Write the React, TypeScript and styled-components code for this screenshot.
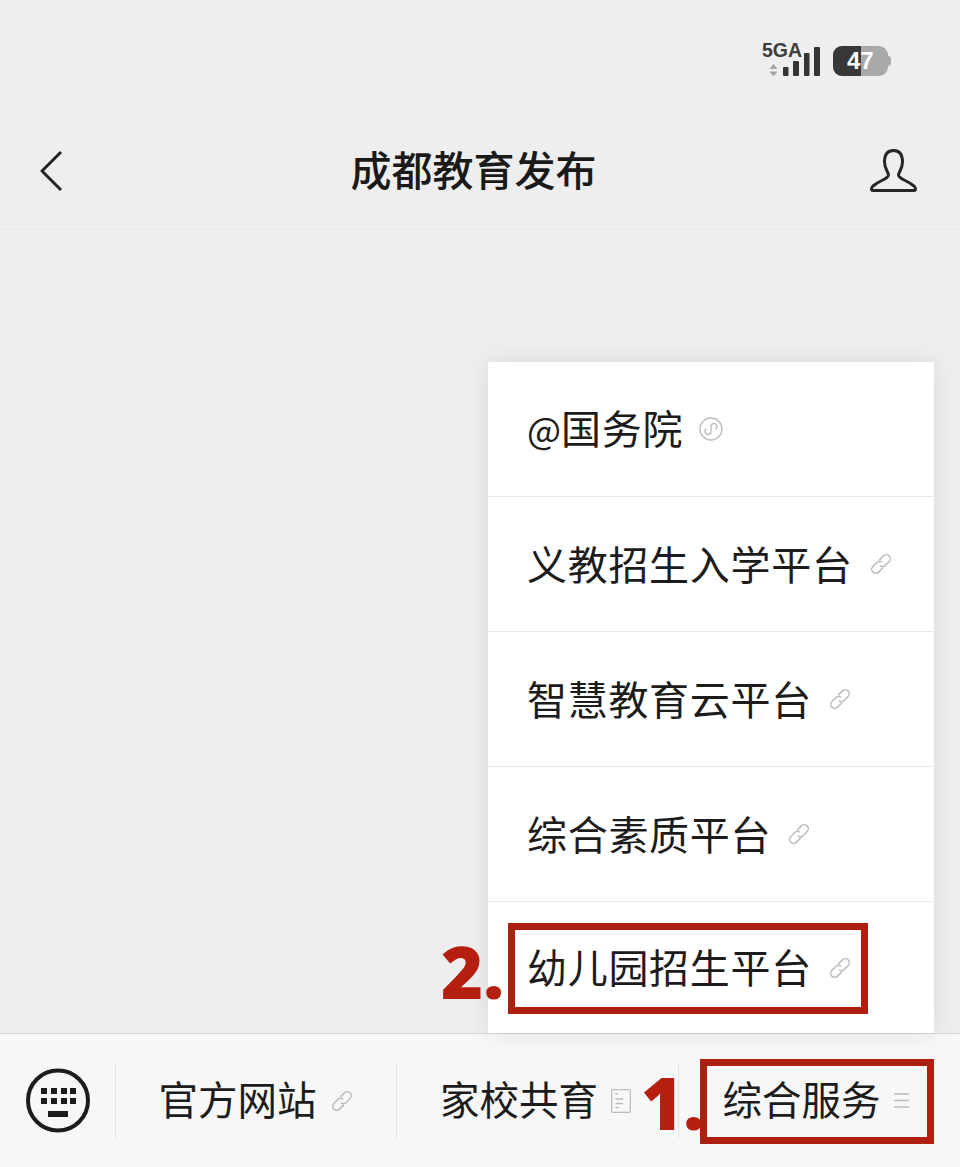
import React from 'react';
import styled, { createGlobalStyle } from 'styled-components';

/* --------------------------------- styles --------------------------------- */

const GlobalStyle = createGlobalStyle`
  html, body {
    margin: 0;
    padding: 0;
    background: #eeeeee;
  }
  * {
    box-sizing: border-box;
  }
`;

const Page = styled.div`
  position: relative;
  width: 960px;
  height: 1167px;
  display: flex;
  flex-direction: column;
  overflow: hidden;
  background: #eeeeee;
  color: #1c1c1c;
  font-family: 'Noto Sans CJK SC', 'Liberation Sans', sans-serif;
`;

const StatusBar = styled.div`
  flex: 0 0 112px;
  display: flex;
  justify-content: flex-end;
  align-items: flex-start;
  gap: 13px;
  padding: 46px 69px 0 0;
`;

const Signal = styled.div`
  position: relative;
  width: 58px;
  height: 30px;
`;

const NetworkLabel = styled.span`
  position: absolute;
  left: 0;
  top: -7px;
  font: 700 19.5px/22px 'Liberation Sans', sans-serif;
  color: #3c3c3c;
`;

const Battery = styled.div`
  position: relative;
  display: flex;
  width: 55px;
  height: 30px;
  margin-right: 3px;
  border-radius: 9px;
  background: #a9a9a9;

  &::after {
    content: '';
    position: absolute;
    right: -3px;
    top: 10px;
    width: 3px;
    height: 10px;
    border-radius: 0 3px 3px 0;
    background: #a9a9a9;
  }
`;

const BatteryFill = styled.div`
  width: 28px;
  border-radius: 9px 0 0 9px;
  background: #383838;
`;

const BatteryLevel = styled.span`
  position: absolute;
  left: 14px;
  top: 2px;
  font: 700 24px/26px 'Liberation Sans', sans-serif;
  color: #ffffff;
`;

const NavBar = styled.header`
  flex: 0 0 118px;
  display: flex;
  justify-content: space-between;
  align-items: center;
  padding: 0 43px 0 40px;
  border-bottom: 1px solid #e6e6e6;
`;

const Title = styled.h1`
  margin: 0 0 6px 14px;
  font-size: 41px;
  line-height: 56px;
  font-weight: 500;
  color: #1a1a1a;
`;

const Content = styled.main`
  flex: 1;
  position: relative;
  z-index: 2;
`;

const Menu = styled.div`
  position: absolute;
  right: 26px;
  bottom: 0;
  width: 446px;
  height: 671px;
  display: flex;
  flex-direction: column;
  background: #ffffff;
  box-shadow: 0 0 22px rgba(0, 0, 0, 0.09);
`;

const MenuRow = styled.div`
  flex: 0 0 135px;
  display: flex;
  align-items: center;
  gap: 16px;
  padding-left: 39px;
  border-bottom: 1px solid #e8e8e8;

  &:last-child {
    flex: 1;
    border-bottom: 0;
  }
`;

const MenuLabel = styled.span`
  margin-bottom: 3px;
  font-size: 40px;
  line-height: 56px;
  letter-spacing: 0.7px;
  color: #1c1c1c;
`;

const AtSign = styled.span`
  font-size: 36px;
  letter-spacing: 0;
`;

const BottomBar = styled.footer`
  flex: 0 0 134px;
  display: grid;
  grid-template-columns: 115px 1px 280px 1px 281px 1px 1fr;
  align-items: center;
  background: #f7f7f7;
  border-top: 1px solid #d6d6d6;
`;

const KeyboardCell = styled.div`
  display: flex;
  justify-content: center;
  align-items: center;
`;

const Divider = styled.div`
  height: 74px;
  background: #e3e3e3;
`;

const TabCell = styled.div<{ $inset: number }>`
  display: flex;
  justify-content: center;
  align-items: center;
  gap: 13px;
  padding-right: ${(p) => p.$inset}px;
`;

const TabLabel = styled.span`
  margin-bottom: 6px;
  font-size: 39.5px;
  line-height: 56px;
  color: #1c1c1c;
`;

const Annotation = styled.div<{ $left: number; $top: number; $width: number; $height: number }>`
  position: absolute;
  z-index: 5;
  left: ${(p) => p.$left}px;
  top: ${(p) => p.$top}px;
  width: ${(p) => p.$width}px;
  height: ${(p) => p.$height}px;
  border: 7px solid #af1f10;
`;

const StepNumber = styled.span<{ $left: number; $top: number }>`
  position: absolute;
  z-index: 5;
  left: ${(p) => p.$left}px;
  top: ${(p) => p.$top}px;
  font: 800 72px/80px 'Open Sans', sans-serif;
  color: #b51f10;
`;

/* ---------------------------------- icons --------------------------------- */

const SignalIcon = () => (
  <svg width="58" height="30" viewBox="0 0 58 30">
    <path d="M7.500 23 L11.500 18 L15.500 23 Z M7.500 25.500 L11.500 30.500 L15.500 25.500 Z" fill="#a4a4a4" />
    <g fill="#343434">
      <rect x="21" y="21" width="5.500" height="9" rx="1" />
      <rect x="31" y="15" width="6" height="15" rx="1" />
      <rect x="42" y="7" width="5.500" height="23" rx="1" />
      <rect x="52" y="1" width="6" height="29" rx="1" />
    </g>
  </svg>
);

const BackIcon = () => (
  <svg width="23" height="42" viewBox="0 0 23 42" fill="none">
    <path d="M21 2 L2 21 L21 40" stroke="#222222" strokeWidth="3" strokeLinejoin="round" />
  </svg>
);

const UserIcon = () => (
  <svg width="47" height="43" viewBox="0 0 47 43" fill="none">
    <path
      d="M23.500 1.500 C16 1.500 14.500 8 14.500 13 C14.500 20 18.500 23 18.500 26 C18.500 30 10 31 3 37 C1 39 1 41.500 3 41.500 H44 C46 41.500 46 39 44 37 C37 31 28.500 30 28.500 26 C28.500 23 32.500 20 32.500 13 C32.500 8 31 1.500 23.500 1.500 Z"
      stroke="#262626"
      strokeWidth="3"
    />
  </svg>
);

const KeyboardIcon = () => (
  <svg width="64" height="65" viewBox="0 0 64 65">
    <circle cx="32" cy="32.500" r="30" fill="none" stroke="#1c1c1c" strokeWidth="4" />
    <g fill="#1c1c1c">
      {[15, 25, 35, 44].map((x) =>
        [20, 30].map((y) => <rect key={`${x}-${y}`} x={x} y={y} width="6" height="6" />),
      )}
      <rect x="22" y="43" width="20" height="6" />
    </g>
  </svg>
);

const LinkIcon = () => (
  <svg width="24" height="24" viewBox="0 0 24 24" fill="none" stroke="#bcbcbc" strokeWidth="1.500">
    <g transform="rotate(-45 12 12)">
      <path d="M10.500 16 H4.500 a4 4 0 0 1 0 -8 H10 a4 4 0 0 1 4 3.500" />
      <path d="M13.500 8 H19.500 a4 4 0 0 1 0 8 H14 a4 4 0 0 1 -4 -3.500" />
    </g>
  </svg>
);

const MiniProgramIcon = () => (
  <svg width="24" height="24" viewBox="0 0 24 24" fill="none" stroke="#bdbdbd" strokeWidth="1.400">
    <circle cx="12" cy="12" r="11" />
    <path d="M7.600 11.900 A3 3 0 1 0 12 14.500 V9.500 A3 3 0 1 1 16.400 12.100" />
  </svg>
);

const DocIcon = () => (
  <svg width="20" height="24" viewBox="0 0 20 24" fill="none" stroke="#bcbcbc" strokeWidth="1.300">
    <rect x="0.700" y="0.700" width="18.600" height="22.600" rx="1" />
    <path d="M4.500 5 H7 M4.500 10 H12 M4.500 14.500 H12 M4.500 18.500 H8" />
  </svg>
);

const ListIcon = () => (
  <svg width="15" height="15" viewBox="0 0 15 15" fill="none" stroke="#bcbcbc" strokeWidth="1.400">
    <path d="M0 1 H15 M0 7.500 H15 M0 14 H15" />
  </svg>
);

/* ---------------------------------- data ---------------------------------- */

const menuItems = ['义教招生入学平台', '智慧教育云平台', '综合素质平台', '幼儿园招生平台'];

/* -------------------------------- component ------------------------------- */

const App = (): JSX.Element => {
  return (
    <Page>
      <GlobalStyle />
      <StatusBar>
        <Signal>
          <NetworkLabel>5GA</NetworkLabel>
          <SignalIcon />
        </Signal>
        <Battery>
          <BatteryFill />
          <BatteryLevel>47</BatteryLevel>
        </Battery>
      </StatusBar>

      <NavBar>
        <BackIcon />
        <Title>成都教育发布</Title>
        <UserIcon />
      </NavBar>

      <Content>
        <Menu>
          <MenuRow>
            <MenuLabel>
              <AtSign>@</AtSign>国务院
            </MenuLabel>
            <MiniProgramIcon />
          </MenuRow>
          {menuItems.map((item) => (
            <MenuRow key={item}>
              <MenuLabel>{item}</MenuLabel>
              <LinkIcon />
            </MenuRow>
          ))}
        </Menu>
      </Content>

      <BottomBar>
        <KeyboardCell>
          <KeyboardIcon />
        </KeyboardCell>
        <Divider />
        <TabCell $inset={0}>
          <TabLabel>官方网站</TabLabel>
          <LinkIcon />
        </TabCell>
        <Divider />
        <TabCell $inset={4}>
          <TabLabel>家校共育</TabLabel>
          <DocIcon />
        </TabCell>
        <Divider />
        <TabCell $inset={8}>
          <TabLabel>综合服务</TabLabel>
          <ListIcon />
        </TabCell>
      </BottomBar>

      <StepNumber $left={441} $top={931}>2.</StepNumber>
      <Annotation $left={508} $top={923} $width={360} $height={91} />
      <StepNumber $left={641} $top={1062}>1.</StepNumber>
      <Annotation $left={700} $top={1059} $width={234} $height={85} />
    </Page>
  );
};

export default App;
